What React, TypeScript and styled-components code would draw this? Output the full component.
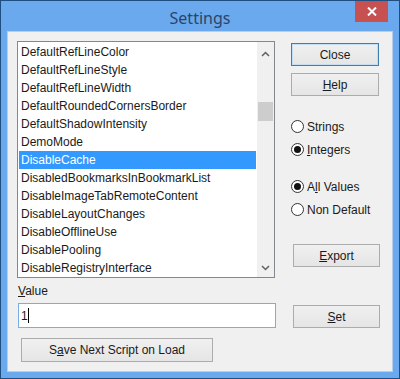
import React from 'react'
import styled, { createGlobalStyle } from 'styled-components'

const GlobalStyle = createGlobalStyle`
  html, body { margin: 0; padding: 0; background: #fff; }
  body { font-family: "Liberation Sans", Arial, sans-serif; font-size: 12px; color: #1a1a1a; }
`

const items = [
  'DefaultRefLineColor',
  'DefaultRefLineStyle',
  'DefaultRefLineWidth',
  'DefaultRoundedCornersBorder',
  'DefaultShadowIntensity',
  'DemoMode',
  'DisableCache',
  'DisabledBookmarksInBookmarkList',
  'DisableImageTabRemoteContent',
  'DisableLayoutChanges',
  'DisableOfflineUse',
  'DisablePooling',
  'DisableRegistryInterface',
]

export default function App() {
  return (<>
    <GlobalStyle/>
    <Window>
      <TitleBar>
        <Title>Settings</Title>
        <CloseX aria-label="close">
          <svg width="10" height="9" viewBox="0 0 10 9">
            <path d="M1 0.5 L9 8.5 M9 0.5 L1 8.5" stroke="#fff" strokeWidth="2"/>
          </svg>
        </CloseX>
      </TitleBar>
      <Client>
        <ListBox>
          <Items>
            {items.map(name =>
              <Item key={name} $selected={name === 'DisableCache'}>{name}</Item>
            )}
          </Items>
          <ScrollBar>
            <ArrowBox>
              <svg width="17" height="17" viewBox="0 0 17 17">
                <path d="M5 14 L8.5 10.5 L12 14" stroke="#606060" strokeWidth="1.5" fill="none"/>
              </svg>
            </ArrowBox>
            <Track>
              <Thumb/>
            </Track>
            <ArrowBox>
              <svg width="17" height="17" viewBox="0 0 17 17">
                <path d="M5 6 L8.5 9.5 L12 6" stroke="#606060" strokeWidth="1.5" fill="none"/>
              </svg>
            </ArrowBox>
          </ScrollBar>
        </ListBox>

        <Side>
          <Button $default>Close</Button>
          <Button style={{ marginTop: 7 }}><u>H</u>elp</Button>
          <RadioGroup $gap={19}>
            <RadioRow><RadioCircle/><span>Strings</span></RadioRow>
            <RadioRow><RadioCircle $checked/><span><u>I</u>ntegers</span></RadioRow>
          </RadioGroup>
          <RadioGroup $gap={14}>
            <RadioRow><RadioCircle $checked/><span>A<u>l</u>l Values</span></RadioRow>
            <RadioRow><RadioCircle/><span>Non Default</span></RadioRow>
          </RadioGroup>
          <SmallButton style={{ marginTop: 23 }}><u>E</u>xport</SmallButton>
        </Side>

        <Label><u>V</u>alue</Label>
        <TextBox>1<Caret/></TextBox>
        <SetButton><u>S</u>et</SetButton>
        <SaveButton>S<u>a</u>ve Next Script on Load</SaveButton>
      </Client>
    </Window>
  </>)
}

const Window = styled.div`
  width: 400px;
  height: 379px;
  box-sizing: border-box;
  border: 1px solid #1f4f80;
  background: #6aa9ee;
  display: flex;
  flex-direction: column;
  padding: 0 7px 7px;
`

const TitleBar = styled.div`
  height: 31px;
  margin: 0 -7px;
  padding: 0 11px;
  display: grid;
  grid-template-columns: 1fr auto 1fr;
  align-items: start;
`

const Title = styled.div`
  grid-column: 2;
  margin-top: 7px;
  font-family: "Noto Sans", "Open Sans", sans-serif;
  font-size: 16px;
  line-height: 20px;
  color: #2a4569;
`

const CloseX = styled.div`
  grid-column: 3;
  justify-self: end;
  width: 33px;
  height: 21px;
  background: #c75050;
  display: flex;
  align-items: center;
  justify-content: center;
`

const Client = styled.div`
  flex: 1;
  background: #f0f0f0;
  display: grid;
  grid-template-columns: 258px 88px;
  grid-template-rows: 237px auto auto auto;
  column-gap: 16px;
  padding: 9px 13px 9px 9px;
  box-shadow: 0 0 0 1px #b9cfe8;
`

const ListBox = styled.div`
  grid-column: 1;
  grid-row: 1;
  display: flex;
  border: 1px solid #828790;
  background: #fff;
  box-sizing: border-box;
  height: 237px;
`

const Items = styled.ul`
  flex: 1;
  margin: 0;
  padding: 1px 1px 0 1px;
  list-style: none;
  overflow: hidden;
`

const Item = styled.li<{ $selected?: boolean }>`
  height: 18px;
  line-height: 18px;
  padding-left: 2px;
  white-space: nowrap;
  font-size: 12px;
  background: ${p => p.$selected ? '#3399ff' : 'transparent'};
  color: ${p => p.$selected ? '#fff' : '#1a1a1a'};
`

const ScrollBar = styled.div`
  width: 17px;
  background: #f0f0f0;
  display: flex;
  flex-direction: column;
`

const ArrowBox = styled.div`
  height: 17px;
  display: flex;
`

const Track = styled.div`
  flex: 1;
  padding-top: 43px;
`

const Thumb = styled.div`
  height: 19px;
  margin: 0 1px;
  background: #cdcdcd;
`

const Side = styled.div`
  grid-column: 2;
  grid-row: 1;
  display: flex;
  flex-direction: column;
  padding-top: 2px;
`

const Button = styled.button<{ $default?: boolean }>`
  width: 88px;
  height: 23px;
  padding: 0;
  box-sizing: border-box;
  font-family: "Liberation Sans", Arial, sans-serif;
  font-size: 12px;
  font-weight: 400;
  color: #1a1a1a;
  border: 1px solid ${p => p.$default ? '#3c7fb1' : '#acacac'};
  background: linear-gradient(#f0f0f0, #e5e5e5);
  box-shadow: ${p => p.$default ? 'inset 0 0 0 1px #c4def5' : 'none'};
`

const SmallButton = styled(Button)`
  width: 87px;
  margin-left: 2px;
`

const SetButton = styled(SmallButton)`
  grid-column: 2;
  grid-row: 3;
  align-self: end;
`

const SaveButton = styled(Button)`
  grid-column: 1;
  grid-row: 4;
  justify-self: start;
  width: 192px;
  height: 24px;
  margin: 10px 0 0 4px;
`

const RadioGroup = styled.div<{ $gap: number }>`
  margin-top: ${p => p.$gap}px;
  display: flex;
  flex-direction: column;
`

const RadioRow = styled.label`
  height: 23px;
  display: flex;
  align-items: center;
  gap: 3px;
  font-size: 12px;
`

const RadioCircle = styled.span<{ $checked?: boolean }>`
  width: 13px;
  height: 13px;
  box-sizing: border-box;
  border-radius: 50%;
  border: 1px solid #333;
  background: #fff;
  display: flex;
  align-items: center;
  justify-content: center;
  &::after {
    content: '';
    width: 7px;
    height: 7px;
    border-radius: 50%;
    background: #111;
    display: ${p => p.$checked ? 'block' : 'none'};
  }
`

const Label = styled.div`
  grid-column: 1;
  grid-row: 2;
  margin-top: 6px;
  padding-left: 1px;
  line-height: 15px;
`

const TextBox = styled.div`
  grid-column: 1;
  grid-row: 3;
  width: 258px;
  height: 25px;
  margin: 4px 0 0 1px;
  box-sizing: border-box;
  border: 1px solid #7aaee3;
  background: #fff;
  padding-left: 2px;
  display: flex;
  align-items: center;
`

const Caret = styled.span`
  width: 1px;
  height: 15px;
  background: #000;
`
